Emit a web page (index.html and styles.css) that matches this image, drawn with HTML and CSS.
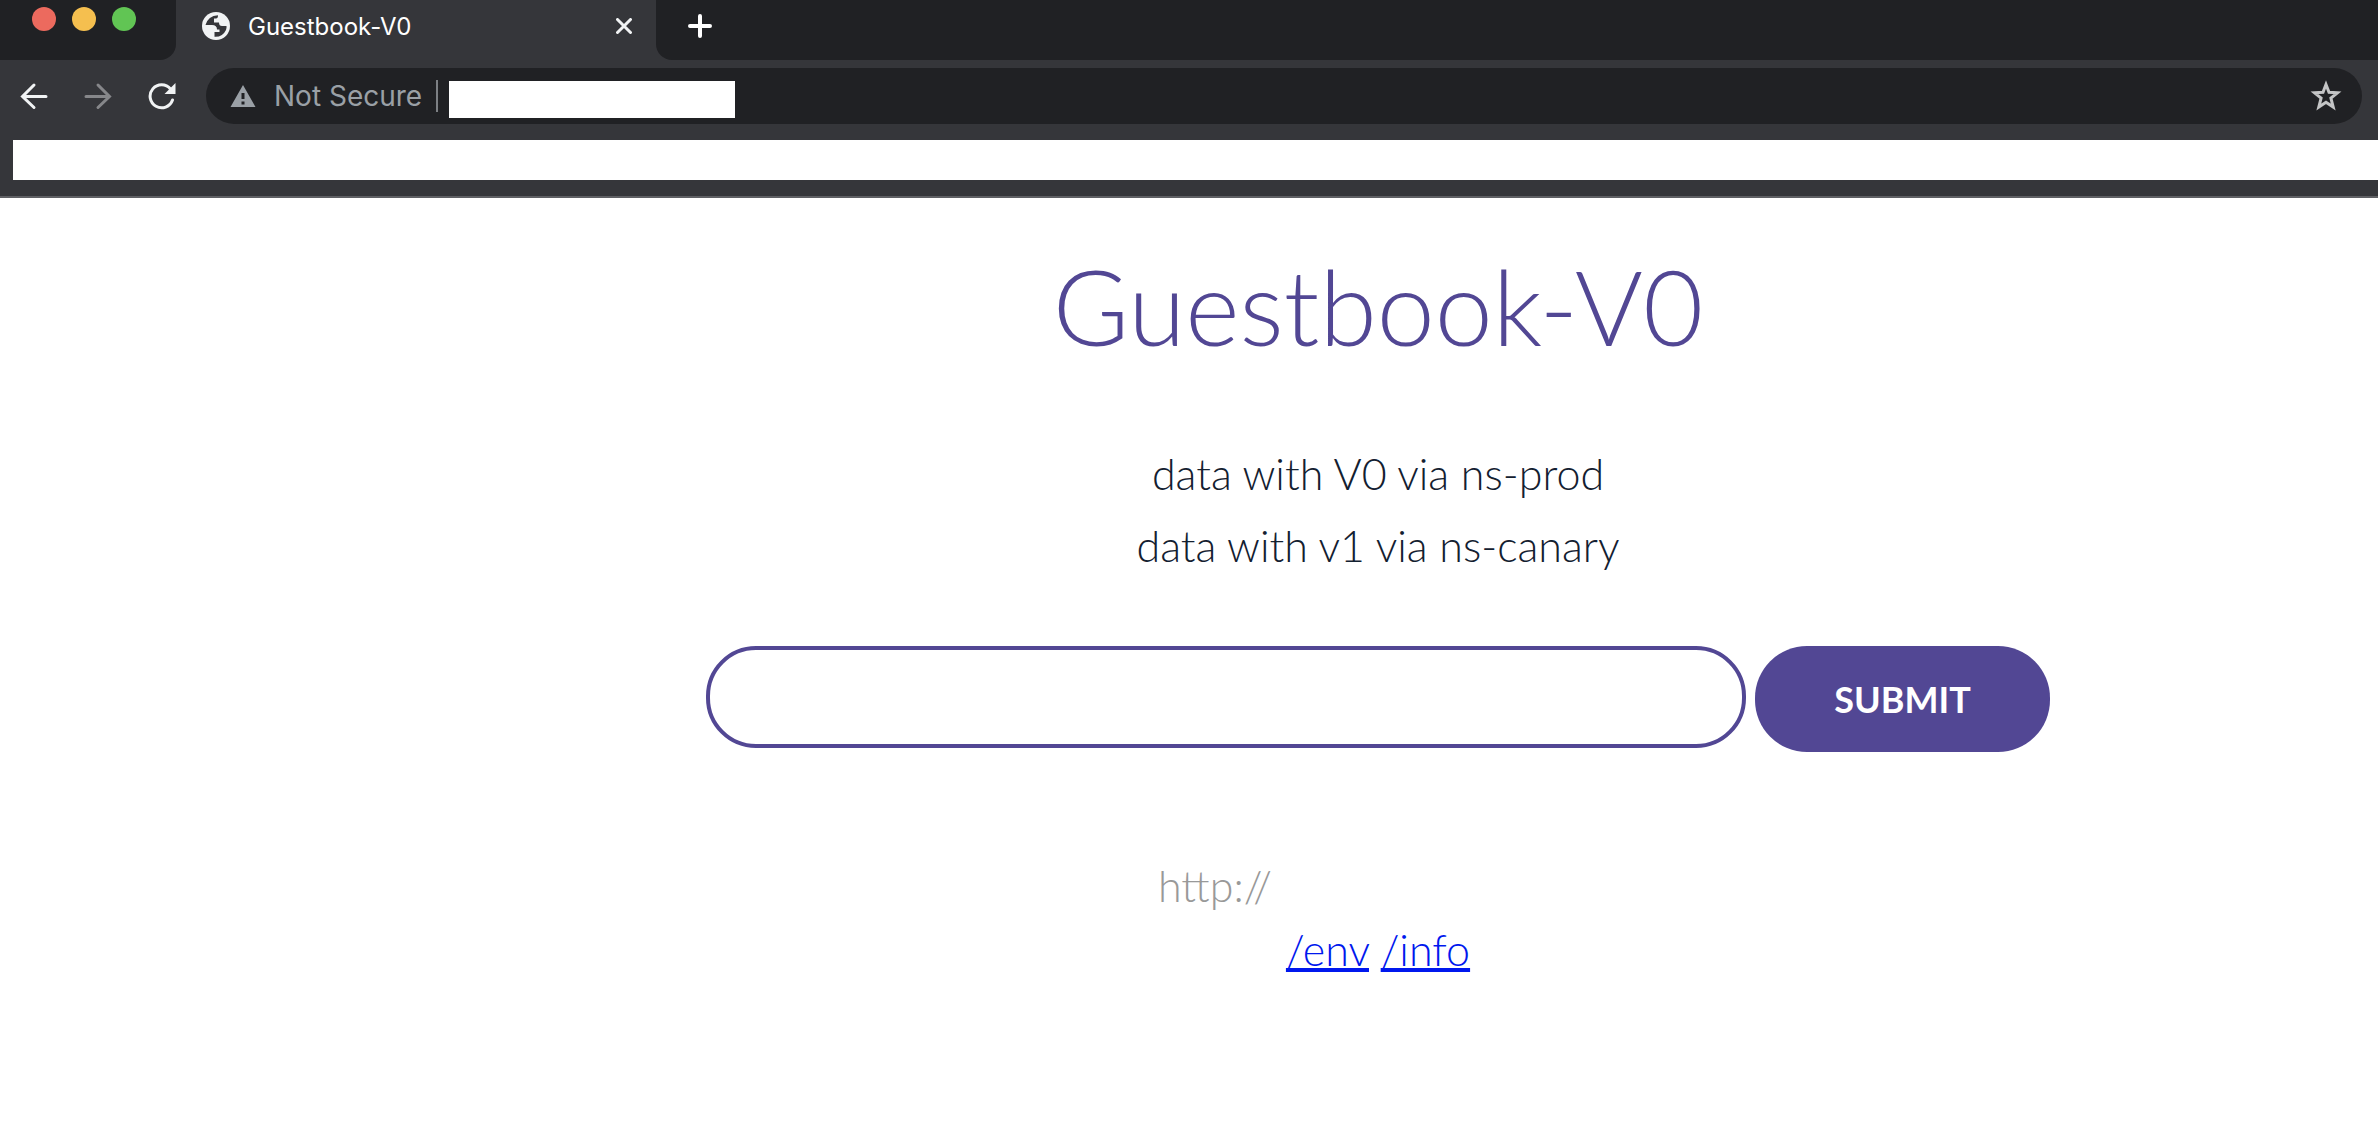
FILE: index.html
```html
<!DOCTYPE html>
<html lang="en">
<head>
<meta charset="utf-8">
<title>Guestbook-V0</title>
<link rel="stylesheet" href="styles.css">
</head>
<body>
<header class="browser">
  <div class="tab-strip">
    <div class="strip-left">
      <span class="light light-red"></span>
      <span class="light light-yellow"></span>
      <span class="light light-green"></span>
    </div>
    <div class="tab">
      <svg class="globe" viewBox="0 0 28 28" aria-hidden="true"><circle cx="14" cy="14" r="14" fill="#f1f3f4"/><path d="M3.500 13H10q5 0 5 4.500h2.500V20h-5v4.800q8 .5 11.500-6.800.8-2.500.5-4h-4.500q-3 0-3-3.500h-5V6.500h2q2 0 2-3.200Q6 4 3.500 13Z" fill="#35363a"/></svg>
      <span class="tab-title">Guestbook-V0</span>
      <button class="icon-button" aria-label="Close tab"><svg class="close" viewBox="0 0 16 16"><path d="M1.500 1.500l13 13M14.500 1.500l-13 13"/></svg></button>
    </div>
    <div class="strip-right">
      <button class="icon-button" aria-label="New tab"><svg class="plus" viewBox="0 0 24 24"><path d="M12 2v20M2 12h20"/></svg></button>
    </div>
  </div>
  <div class="toolbar">
    <nav class="nav-buttons" aria-label="History">
      <button class="icon-button" aria-label="Back"><svg class="nav-icon" viewBox="0 0 28 28"><path d="M14 3L2.500 14.500 14 25.500M3 14.500h23"/></svg></button>
      <button class="icon-button" aria-label="Forward" disabled><svg class="nav-icon dim" viewBox="0 0 28 28"><path d="M14 3l11.500 11.500L14 25.500M25 14.500H2"/></svg></button>
      <button class="icon-button" aria-label="Reload"><svg class="nav-icon" viewBox="0 0 28 28"><path d="M24.500 18A11.500 11.500 0 1 1 22.500 7"/><path d="M27.500 1v11h-11z" class="solid"/></svg></button>
    </nav>
    <div class="omnibox">
      <svg class="warning" viewBox="0 0 26 22" aria-hidden="true"><path fill="#9aa0a6" fill-rule="evenodd" d="M13 0l12.500 22H.5zM11.500 8v6h3V8zM11.500 16.500v3h3v-3z"/></svg>
      <label class="security" for="address">Not Secure</label>
      <input class="address" id="address" type="text">
      <button class="icon-button star-button" aria-label="Bookmark this page"><svg class="star" viewBox="0 0 32 32"><path d="M16 4.500l3 7.800 8.500.5-6.600 5.300 2.300 8.900-7.200-4.800-7.200 4.800 2.300-8.900-6.600-5.300 8.500-.5z"/></svg></button>
    </div>
  </div>
  <div class="bookmarks"></div>
</header>
<main class="page">
  <h1 class="title">Guestbook-V0</h1>
  <div class="entries">
    <p class="entry">data with V0 via ns-prod</p>
    <p class="entry">data with v1 via ns-canary</p>
  </div>
  <form class="guest-form">
    <input class="guest-input" type="text" aria-label="Guestbook entry">
    <button class="submit" type="submit">SUBMIT</button>
  </form>
  <footer class="host">
    <p class="host-url">http://</p>
    <p class="host-links"><a href="/env">/env</a> <a href="/info">/info</a></p>
  </footer>
</main>
</body>
</html>
```
FILE: styles.css
```css
* { box-sizing: border-box; }
body { margin: 0; background: #fff; font-family: Lato, "Liberation Sans", sans-serif; font-weight: 300; }
h1, p { margin: 0; font-weight: 300; }

.browser { background: #35363a; border-bottom: 2px solid #5f6064; font-family: Inter, "Liberation Sans", sans-serif; font-weight: 400; }
.tab-strip { display: flex; height: 60px; }
.strip-left { display: flex; gap: 16px; width: 176px; padding: 7px 0 0 32px; background: #202124; border-bottom-right-radius: 16px; }
.light { width: 24px; height: 24px; border-radius: 50%; }
.light-red { background: #ec6a5e; }
.light-yellow { background: #f5bf4f; }
.light-green { background: #61c554; }
.tab { display: flex; align-items: center; width: 480px; height: 52px; padding: 0 24px 0 26px; }
.globe { width: 28px; height: 28px; margin-right: 18px; }
.tab-title { flex: 1; color: #fff; font-size: 24px; }
.strip-right { flex: 1; padding: 14px 32px; background: #202124; border-bottom-left-radius: 16px; }

.icon-button { display: block; padding: 0; border: 0; background: none; }
.icon-button svg { display: block; fill: none; stroke: #f1f3f4; stroke-width: 3; stroke-linecap: round; }
.close { width: 16px; height: 16px; }
.plus { width: 24px; height: 24px; }
.icon-button .plus { stroke: #fff; stroke-width: 4; }
.nav-icon { width: 28px; height: 28px; }
.icon-button .dim { stroke: #86878a; }
.icon-button .solid { fill: #f1f3f4; stroke: none; }

.toolbar { display: flex; align-items: center; padding: 8px 16px 16px 20px; }
.nav-buttons { display: flex; gap: 36px; width: 186px; }
.omnibox { display: flex; flex: 1; align-items: center; height: 56px; padding: 0 20px 0 24px; border-radius: 28px; background: #202124; }
.warning { width: 26px; height: 22px; }
.security { margin-left: 18px; padding-right: 14px; border-right: 2px solid #7d8084; color: #9aa0a6; font-size: 28px; line-height: 32px; }
.address { width: 286px; height: 37px; margin: 6px 0 0 11px; padding: 0 8px; border: 0; background: #fff; font-size: 24px; }
.star-button { margin-left: auto; }
.star { width: 32px; height: 32px; }
.icon-button .star { stroke: #c4c5c6; stroke-width: 3; stroke-linecap: butt; }
.bookmarks { height: 40px; margin: 0 0 16px 13px; background: #fff; }

.page { display: flex; flex-direction: column; align-items: center; padding: 44px 0 48px 378px; }
.title { color: #524794; font-size: 104px; line-height: 128px; }
.entries { margin-top: 68px; color: #132030; text-align: center; }
.entry { font-size: 43px; line-height: 72px; }
.guest-form { display: flex; align-items: flex-start; gap: 9px; margin-top: 64px; }
.guest-input { width: 1040px; height: 102px; padding: 0 48px; border: 4px solid #524794; border-radius: 50px; background: #fff; font: inherit; font-size: 43px; }
.submit { width: 295px; height: 106px; border: 0; border-radius: 52px; background: #524794; color: #fff; font-family: inherit; font-weight: 700; font-size: 36px; }
.host { width: 440px; margin-top: 102px; font-size: 43px; line-height: 64px; }
.host-url { color: #999; }
.host-links { text-align: center; }
.host-links a { color: #0018ee; text-decoration-thickness: 4px; }
```
